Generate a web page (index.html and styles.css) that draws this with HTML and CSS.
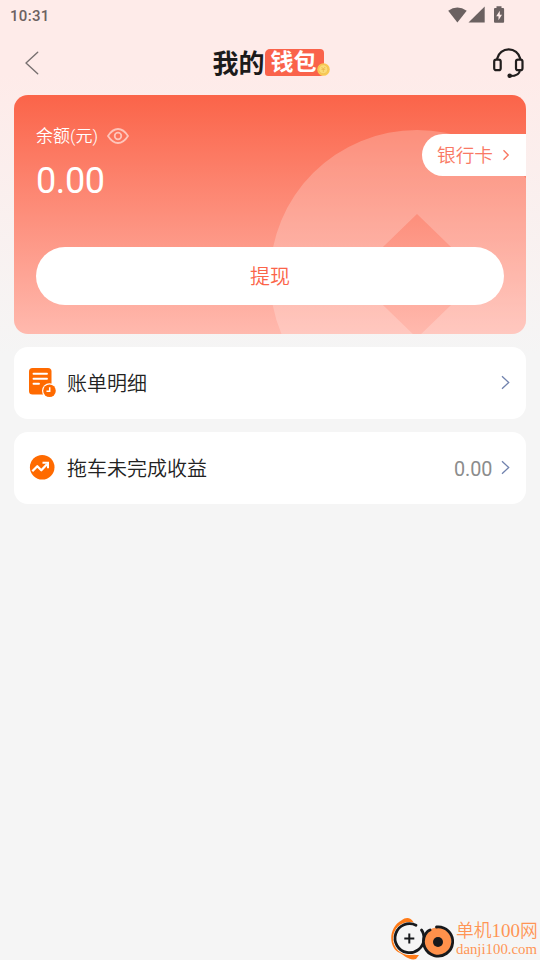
FILE: index.html
```html
<!DOCTYPE html>
<html lang="zh-CN">
<head>
<meta charset="utf-8">
<title>我的钱包</title>
<link rel="stylesheet" href="styles.css">
</head>
<body>
<div class="screen">
  <div class="status">
    <span class="time">10:31</span>
    <svg class="status-icons" width="60" height="20" viewBox="0 0 60 20" fill="#6b6161">
      <path d="M0.200 4.700Q9.300-1.500 18.700 4.700L9.400 16.500Z"/>
      <path d="M36.700 .5V16.500H20.500Z"/>
      <path d="M48.500 .3h5v1.600h1.600q1 0 1 1V15.700q0 1-1 1H47q-1 0-1-1V2.900q0-1 1-1h1.500z"/>
      <path d="M51.800 4.800L48.200 10.300h2.300v4l3.500-5.600h-2.200z" fill="#feebe9"/>
    </svg>
  </div>
  <header class="nav">
    <svg class="back" width="16" height="24" viewBox="0 0 16 24" fill="none" stroke="#777070" stroke-width="1.400" stroke-linecap="round" stroke-linejoin="round"><path d="M13.700 1.300L2 12L13.700 22.700"/></svg>
    <h1 class="title"><span class="mine">我的</span><span class="badge">钱包<svg class="coin" width="13" height="13" viewBox="0 0 13 13"><circle cx="6.500" cy="6.500" r="6.300" fill="#f8ca54"/><circle cx="6.300" cy="6.200" r="4.500" fill="#fbdc79" stroke="#efbd50" stroke-width=".7"/><path d="M4.500 4L6.300 6L8.200 4M4.400 6.400h3.800M6.300 6v3" fill="none" stroke="#e9b34a" stroke-width=".7"/></svg></span></h1>
    <svg class="service" width="34" height="34" viewBox="0 0 34 34" fill="none" stroke="#211d1d" stroke-width="2.200">
      <path d="M5.200 14.500V13.500A11.800 11.800 0 0 1 28.200 13.500V14.500"/>
      <rect x="2.200" y="14.600" width="6.500" height="10.600" rx="2"/>
      <rect x="24" y="14.600" width="6.500" height="10.600" rx="2"/>
      <path d="M27.800 25.500Q27.500 31 18 31"/><circle cx="17.700" cy="30.800" r="2.300" fill="#211d1d" stroke="none"/>
    </svg>
  </header>
  <main class="content">
    <section class="balance">
      <svg class="decor" width="512" height="239" viewBox="0 0 512 239">
        <path fill="#fff" fill-opacity=".22" fill-rule="evenodd" d="M403 35a147 147 0 1 1 0 294a147 147 0 1 1 0-294zM403 119l-64 62l64 62l64-62z"/>
      </svg>
      <div class="label"><span class="label-text">余额(元)</span>
        <svg width="22" height="16" viewBox="0 0 22 16" fill="none" stroke="#fff" stroke-opacity=".58" stroke-width="1.800"><path d="M1 8Q5.500 1 11 1Q16.500 1 21 8Q16.500 15 11 15Q5.500 15 1 8Z" stroke-linejoin="round"/><circle cx="11" cy="8" r="3.300"/></svg>
      </div>
      <div class="amount">0.00</div>
      <button class="withdraw"><span class="withdraw-text">提现</span></button>
      <a class="bank"><span class="bank-text">银行卡</span><svg width="8" height="12" viewBox="0 0 8 12" fill="none" stroke="#f97964" stroke-width="1.400"><path d="M1.500 1.300L6.200 6L1.500 10.700"/></svg></a>
    </section>
    <div class="row">
      <svg class="row-icon" width="28" height="32" viewBox="0 0 28 32">
        <rect x="0" y="1" width="22.500" height="26.500" rx="3.500" fill="#ff6a00"/>
        <path d="M4.500 6.700h13.500M4.500 11.700h13.500M4.500 16.700h5.500" stroke="#fff" stroke-width="1.900" stroke-linecap="round"/>
        <circle cx="20.500" cy="23.700" r="7.500" fill="#fff"/><circle cx="20.500" cy="23.700" r="6.300" fill="#ff6a00"/>
        <path d="M20.700 20.200v4h-3.200" fill="none" stroke="#fff" stroke-width="1.500"/>
      </svg>
      <span class="name">账单明细</span>
      <svg class="arrow" width="9" height="15" viewBox="0 0 9 15"><path d="M1 1.300L7.700 7.500L1 13.700"/></svg>
    </div>
    <div class="row">
      <svg class="row-icon" width="28" height="32" viewBox="0 0 28 32">
        <circle cx="13.200" cy="15.300" r="12.300" fill="#ff6a00"/>
        <path d="M3.300 19.300L8.300 14.300L12.300 18.300L18 12.200" fill="none" stroke="#fff" stroke-width="2.300" stroke-linejoin="round"/><path d="M13.500 10.700h5.500v5.500" fill="none" stroke="#fff" stroke-width="2"/>
      </svg>
      <span class="name">拖车未完成收益</span>
      <span class="value">0.00</span>
      <svg class="arrow" width="9" height="15" viewBox="0 0 9 15"><path d="M1 1.300L7.700 7.500L1 13.700"/></svg>
    </div>
  </main>
  <div class="watermark">
    <svg width="64" height="43" viewBox="0 0 64 43" fill="none">
      <path d="M24 6C20 -1 15 1 12 3C-3 11-1 32 10 36C15 39 20 44 26 42L29 38C17 38 4 33 4 20C4 11 10 6 24 6Z" fill="#ff7a16"/>
      <circle cx="19.500" cy="21.500" r="16.500" fill="#f5f5f5"/>
      <path d="M26 8.200A14.500 14.500 0 1 0 34 22Q34 16 31.500 13" stroke="#17191c" stroke-width="2.800" stroke-linecap="round"/>
      <path d="M19.300 16.500v10M14.300 21.500h10" stroke="#17191c" stroke-width="2"/>
      <circle cx="47.500" cy="24.500" r="14" fill="#ff914b"/>
      <path d="M46.500 10A14.600 14.600 0 1 1 35 18Q37 14 40 13" stroke="#17191c" stroke-width="2.800" stroke-linecap="round"/>
      <circle cx="48" cy="25" r="5" fill="#17191c"/>
    </svg>
    <div class="mark-text"><div class="mark-name">单机<span class="mark-num">100</span>网</div><div class="mark-url">danji100.com</div></div>
  </div>
</div>
</body>
</html>
```
FILE: styles.css
```css
* { box-sizing: border-box; }
body { margin: 0; font-family: Roboto, "Noto Sans CJK SC", sans-serif; }
.screen {
  position: relative;
  width: 540px;
  height: 960px;
  overflow: hidden;
  background: linear-gradient(180deg, #feebe9 0, #feebe9 75px, #f5f5f5 355px);
}
.status {
  height: 32px;
  padding: 6px 32px 0 10px;
  display: flex;
  justify-content: space-between;
}
.time { font-size: 15px; line-height: 20px; font-weight: 500; letter-spacing: .3px; color: #6b6161; }
.nav {
  height: 63px;
  padding: 0 14px 3px 24px;
  display: flex;
  align-items: center;
  justify-content: space-between;
}
.back { margin-top: 1px; }
.service { margin-top: -1px; }
.title {
  margin: 1px 0 0 4px;
  display: flex;
  align-items: center;
  font-size: 26px;
  line-height: 32px;
  font-weight: 700;
  color: #1c1b1b;
}
.mine { margin-top: 2px; }
.badge {
  position: relative;
  width: 59px;
  height: 27px;
  padding-left: 6px;
  border-radius: 5px 4px 4px 3px;
  background: #fa634b;
  color: #fff;
  font-size: 23px;
  line-height: 28px;
  white-space: nowrap;
}
.coin { position: absolute; right: -6px; bottom: 0; }
.content { padding: 0 14px; display: grid; gap: 13px; }
.balance {
  position: relative;
  height: 239px;
  padding: 28px 22px 0;
  border-radius: 14px;
  overflow: hidden;
  color: #fff;
  background: linear-gradient(180deg, #fb6449, #ffb9ae);
}
.decor { position: absolute; left: 0; top: 0; }
.label { display: flex; align-items: center; gap: 9px; height: 25px; font-size: 17px; }
.label-text { margin-top: -2px; font-weight: 350; }
.amount { height: 65px; margin-top: 11px; font-size: 36px; line-height: 45px; letter-spacing: -.4px; }
.withdraw {
  position: relative;
  display: block;
  width: 100%;
  height: 58px;
  margin-top: 23px;
  padding: 0 0 2px;
  border: 0;
  border-radius: 29px;
  background: #fff;
  color: #fb6449;
  font: 350 20px "Noto Sans CJK SC", sans-serif;
}
.bank {
  position: absolute;
  right: 0;
  top: 39px;
  width: 104px;
  height: 42px;
  padding-left: 15px;
  display: flex;
  align-items: center;
  gap: 9px;
  border-radius: 21px 0 0 21px;
  background: #fff;
  color: #f97964;
  font-size: 18.700px;
}
.bank-text { margin-top: -3px; font-weight: 350; }
.row {
  height: 72px;
  padding: 0 16px 0 15px;
  display: flex;
  align-items: center;
  border-radius: 14px;
  background: #fff;
}
.row-icon { margin-right: 10px; }
.name { flex: 1; margin-top: -2px; font-size: 20px; font-weight: 350; color: #222; }
.value { margin: 2px 8.500px 0 0; font-size: 19.800px; color: #8c8c8c; }
.arrow { margin-top: -1px; fill: none; stroke: #7183ae; stroke-width: 1.300; }
.watermark {
  position: absolute;
  left: 390px;
  top: 917px;
  display: flex;
  gap: 2px;
  color: #ff9555;
  font-family: "Liberation Serif", "Noto Sans CJK SC", serif;
  white-space: nowrap;
}
.mark-name { height: 24px; font-size: 17.800px; line-height: 28px; font-weight: 350; }
.mark-num { font-size: 19px; }
.mark-url { font-size: 14.800px; line-height: 16px; }
```
